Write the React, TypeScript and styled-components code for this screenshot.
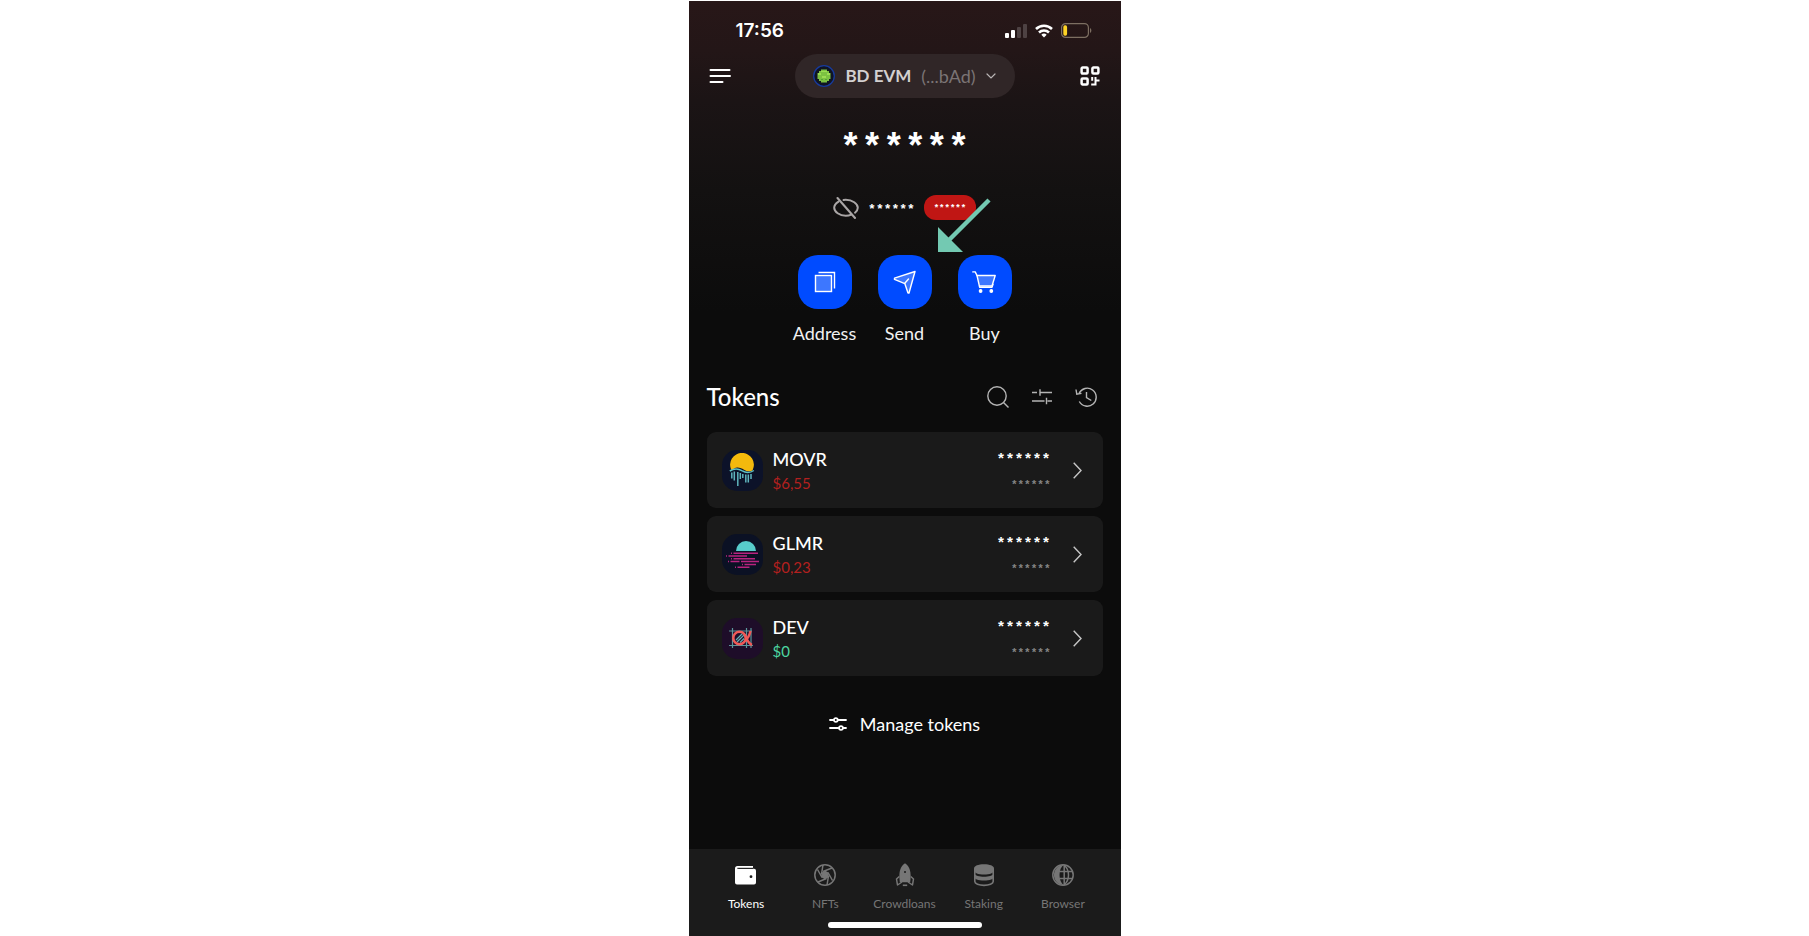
import React from 'react';
import styled, { createGlobalStyle } from 'styled-components';

const GlobalStyle = createGlobalStyle`
  *, *::before, *::after { box-sizing: border-box; }
  body { margin: 0; background: #fff; font-family: Lato, "Liberation Sans", sans-serif; }
  button { margin: 0; padding: 0; border: 0; background: none; color: inherit; font: inherit; cursor: pointer; }
  a { color: inherit; text-decoration: none; }
  h1, h2, p, ul { margin: 0; padding: 0; font-weight: inherit; }
  ul { list-style: none; }
  svg { display: block; flex: none; }
`;

const Page = styled.div`
  display: flex;
  justify-content: center;
  min-height: 100vh;
  padding-top: 1px;
`;

const Phone = styled.div`
  display: flex;
  flex-direction: column;
  width: 100%;
  max-width: 432px;
  color: #fff;
  background: #0c0c0c linear-gradient(#281718 0, #231617 50px, #1b1415 100px, #131111 190px, #0c0c0c 310px) no-repeat;
`;

const StatusBar = styled.div`
  display: flex;
  align-items: center;
  justify-content: space-between;
  height: 53px;
  padding: 6px 29px 0 47px;
`;

const Clock = styled.time`
  font: 600 19px/24px Inter, sans-serif;
`;

const StatusIcons = styled.div`
  display: flex;
  align-items: center;
  gap: 8px;
`;

const Header = styled.header`
  display: flex;
  align-items: center;
  justify-content: space-between;
  padding: 0 18px;
`;

const IconButton = styled.button`
  display: grid;
  place-items: center;
  width: 26px;
  height: 26px;
  color: #b4b4b4;
`;

const AccountButton = styled.button`
  display: flex;
  align-items: center;
  justify-content: center;
  width: 220px;
  height: 44px;
  gap: 10px;
  border-radius: 22px;
  background: #302627;
  font-size: 17px;
  line-height: 24px;
`;

const AccountName = styled.span`
  color: #d3d0d0;
  font-weight: 700;
`;

const AccountAddress = styled.span`
  color: #7b7475;
  font-size: 18px;
`;

const Mask = styled.span<{ $size: number; $color?: string }>`
  color: ${(p) => p.$color ?? '#fff'};
  font-family: "Liberation Mono", monospace;
  font-weight: 700;
  font-size: ${(p) => p.$size}px;
  line-height: 1;
`;

const Balance = styled.h1`
  display: flex;
  justify-content: center;
  padding: 34px 0 27px;
`;

const Amounts = styled.div`
  position: relative;
  display: flex;
  align-items: center;
  height: 25px;
  margin-bottom: 35px;
  gap: 9px;

  ${Mask} {
    padding-top: 3px;
  }
`;

const Change = styled.span`
  display: flex;
  align-items: center;
  justify-content: center;
  width: 52px;
  height: 25px;
  border-radius: 12px;
  background: #c01614;
`;

const Pointer = styled.svg`
  position: absolute;
  top: 3px;
  right: -15px;
`;

const Actions = styled.div`
  display: flex;
  justify-content: center;
`;

const Action = styled.button`
  display: flex;
  flex-direction: column;
  align-items: center;
  width: 80px;
  gap: 12px;
  color: #f2f2f2;
  font-size: 18px;
  line-height: 24px;
`;

const ActionTile = styled.span`
  display: grid;
  place-items: center;
  width: 54px;
  height: 54px;
  border-radius: 20px;
  background: #004bff;
`;

const SectionHeader = styled.div`
  display: flex;
  align-items: center;
  justify-content: space-between;
  height: 40px;
  margin: 32px 22px 15px 18px;
`;

const SectionTitle = styled.h2`
  font-size: 24px;
  font-weight: 500;
  line-height: 32px;
`;

const Tools = styled.div`
  display: flex;
  gap: 18px;
`;

const TokenList = styled.ul`
  display: grid;
  gap: 8px;
  padding: 0 18px;
`;

const TokenCard = styled.button`
  display: flex;
  align-items: center;
  width: 100%;
  height: 76px;
  padding: 0 21px 0 15px;
  border-radius: 9px;
  background: #1a1a1a;
  text-align: left;
`;

const TokenLogo = styled.span<{ $bg: string }>`
  display: grid;
  place-items: center;
  width: 41px;
  height: 41px;
  margin-right: 10px;
  border-radius: 15px;
  background: ${(p) => p.$bg};
`;

const TokenText = styled.span`
  display: flex;
  flex: 1;
  flex-direction: column;
  gap: 2px;
`;

const TokenName = styled.span`
  font-size: 18px;
  font-weight: 500;
  line-height: 24px;
`;

const TokenPrice = styled.span<{ $up?: boolean }>`
  color: ${(p) => (p.$up ? '#4cd6a0' : '#b3201f')};
  font-size: 15px;
  line-height: 20px;
`;

const TokenAmount = styled.span`
  display: flex;
  flex-direction: column;
  align-items: flex-end;
  gap: 12px;
  margin-right: 22px;
  padding-top: 4px;
`;

const ManageButton = styled.button`
  display: flex;
  align-items: center;
  align-self: center;
  gap: 13px;
  margin: 28px 0;
  font-size: 18px;
  line-height: 40px;
`;

const TabBar = styled.nav`
  display: flex;
  flex-direction: column;
  align-items: center;
  gap: 8px;
  margin-top: auto;
  padding: 14px 18px 8px;
  background: #1b1b1b;
`;

const Tabs = styled.div`
  display: flex;
  width: 100%;
`;

const Tab = styled.a<{ $active?: boolean }>`
  display: flex;
  flex: 1 1 0;
  flex-direction: column;
  align-items: center;
  gap: 7px;
  color: ${(p) => (p.$active ? '#fff' : '#767676')};
  font-size: 12px;
  line-height: 20px;
  white-space: nowrap;
`;

const HomeIndicator = styled.div`
  width: 154px;
  height: 6px;
  border-radius: 3px;
  background: #fff;
`;

const STARS = '******';

const SignalIcon = () => (
  <svg width="22" height="14" viewBox="0 0 22 14" fill="#fff">
    <rect x="0" y="9" width="4" height="5" rx="1" />
    <rect x="6" y="6" width="4" height="8" rx="1" />
    <rect x="12" y="3" width="4" height="11" rx="1" fill="#4e4243" />
    <rect x="18" y="0" width="4" height="14" rx="1" fill="#4e4243" />
  </svg>
);

const WifiIcon = () => (
  <svg width="18" height="14" viewBox="0 0 18 14" fill="none" stroke="#fff" strokeWidth="2.6">
    <path d="M1 5a11.6 11.6 0 0 1 16 0" />
    <path d="M4 8.5a7.2 7.2 0 0 1 10 0" />
    <path d="M9 13.6 6.3 10.8a4 4 0 0 1 5.4 0z" fill="#fff" stroke="none" />
  </svg>
);

const BatteryIcon = () => (
  <svg width="31" height="15" viewBox="0 0 31 15">
    <rect x=".6" y=".6" width="26.8" height="13.8" rx="4" fill="none" stroke="#7d6f62" strokeWidth="1.2" />
    <rect x="2.3" y="2.3" width="3.8" height="10.4" rx="1.6" fill="#ffd426" />
    <path d="M29 5c1.8.8 1.8 4.2 0 5z" fill="#7d6f62" />
  </svg>
);

const MenuIcon = () => (
  <svg width="22" height="16" viewBox="0 0 22 16" fill="none" stroke="#fff" strokeWidth="2" strokeLinecap="round">
    <path d="M1.5 2h19M1.500 8h19.500M1.500 14h12" />
  </svg>
);

const QrIcon = () => (
  <svg width="20" height="20" viewBox="0 0 20 20" fill="none" stroke="#fff" strokeWidth="2.5">
    <rect x="1.600" y="1.600" width="6" height="6" rx="1" />
    <rect x="12.400" y="1.600" width="6" height="6" rx="1" />
    <rect x="1.600" y="12.400" width="6" height="6" rx="1" />
    <path d="M12.200 11v3.800M11.200 18.400h4.300V11M15.500 14.400h4" strokeWidth="2" />
  </svg>
);

const AvatarIcon = () => (
  <svg width="22" height="22" viewBox="0 0 22 22">
    <circle cx="11" cy="11" r="10.300" fill="#101522" stroke="#173a9c" strokeWidth="1.300" />
    <path d="M8 4.500h6V6h2v2h1.500v6H16v2h-2v1.500H8V16H6v-2H4.500V8H6V6h2z" fill="#7cc142" />
    <path d="M5 8h3v2H5zM14 8h3v2h-3zM9 11h4v2H9zM8 6h6v1H8z" fill="#9bdc52" />
    <path d="M8 14h2v1H8zM12 14h2v1h-2z" fill="#56a236" />
  </svg>
);

const ChevronDown = () => (
  <svg width="10" height="6" viewBox="0 0 10 6" fill="none" stroke="#b9b5b5" strokeWidth="1.2" strokeLinecap="round">
    <path d="m1 1 4 4 4-4" />
  </svg>
);

const HiddenEyeIcon = () => (
  <svg width="26" height="22" viewBox="0 0 26 22" fill="none" stroke="#aaa6a6" strokeWidth="2" strokeLinecap="round">
    <path d="M5.500 4.600C2.900 6.300 1.200 8.700 1.200 10.700c0 4 5.300 8 11.600 8 2 0 3.900-.4 5.500-1.100" />
    <path d="M10.500 3c.8-.2 1.500-.2 2.300-.2 6.500 0 12 4 12 8 0 1.700-1 3.400-2.800 4.900" />
    <path d="m4.500 1 17.500 20" />
  </svg>
);

const AddressIcon = () => (
  <svg width="22" height="22" viewBox="0 0 22 22" fill="none" stroke="#fff" strokeWidth="1.400">
    <rect x="1.500" y="4.500" width="16" height="16" fill="#3d77ff" />
    <path d="M4.500 1.500h16v16" />
  </svg>
);

const SendIcon = () => (
  <svg width="24" height="24" viewBox="0 0 24 24" fill="none" stroke="#fff" strokeWidth="1.400" strokeLinejoin="round" strokeLinecap="round">
    <path d="M22 1.500 1.500 8.200v1.200l10.300 4.200L15 23h1z" fill="#3d77ff" />
    <path d="m11.800 13.300 3.700-4.300" />
  </svg>
);

const CartIcon = () => (
  <svg width="26" height="22" viewBox="0 0 26 22" fill="none" stroke="#fff" strokeWidth="1.400" strokeLinecap="round" strokeLinejoin="round">
    <path d="M5 4.500h18.200L20 15H7.500" fill="#3d77ff" />
    <path d="M.8.900h2.400L5 4.500 7.700 16.300H20l1-3" />
    <circle cx="8.600" cy="20" r="1.200" fill="#fff" />
    <circle cx="19.300" cy="20" r="1.200" fill="#fff" />
  </svg>
);

const SearchIcon = () => (
  <svg width="22" height="22" viewBox="0 0 22 22" fill="none" stroke="currentColor" strokeWidth="1.400">
    <circle cx="10" cy="10" r="9.200" />
    <path d="m16.500 16.500 5 5" />
  </svg>
);

const FilterIcon = () => (
  <svg width="20" height="16" viewBox="0 0 20 16" fill="none" stroke="currentColor" strokeWidth="1.400">
    <path d="M0 3.500h5M8 3.500h12M8 .2v6.600M0 12h12.500M15.500 12h4.500M14.500 8.700v6.600" />
  </svg>
);

const HistoryIcon = () => (
  <svg width="22" height="20" viewBox="0 0 22 20" fill="none" stroke="currentColor" strokeWidth="1.400">
    <path d="M4 6.500A9 9 0 1 1 4.300 14.500" />
    <path d="M1 2.500l.8 4.700 4.700-.8M11.500 5v5.500l4.800 3" />
  </svg>
);

const ChevronRight = () => (
  <svg width="9" height="17" viewBox="0 0 9 17" fill="none" stroke="#c6c6c6" strokeWidth="1.400">
    <path d="m.7.800 7.300 7.700L.7 16.200" />
  </svg>
);

const ManageIcon = () => (
  <svg width="18" height="14" viewBox="0 0 18 14" fill="none" stroke="#fff" strokeWidth="1.800" strokeLinecap="round">
    <path d="M1 3h3.500M9 3h8M1 11h8.500M14 11h3" />
    <circle cx="6.800" cy="3" r="1.900" />
    <circle cx="12" cy="11" r="1.900" />
  </svg>
);

const MoonriverLogo = () => (
  <svg width="26" height="34" viewBox="0 0 26 34" fill="none">
    <path d="M2.300 17A11.900 11.900 0 1 1 23.700 17c-1 1.200-3.600 1.800-6.200.9-3-1.100-5.400-3.800-9.300-3.500-2.200.2-3.500 1.500-5.900 2.600z" fill="#f4b90d" />
    <path d="M.8 18c4.200-2.600 7.400-3.200 12-.300 4.500 2.600 8 2.600 12-.2" stroke="#5fc0c4" strokeWidth="1.500" />
    <path d="M2.800 19.500v6M5.300 18.500v9M8.800 19v14M11.300 20v6M13.800 21v4M16.800 21.500v8M19.300 21.500v8M22 21v5" stroke="#5fb4bd" strokeWidth="1.500" />
  </svg>
);

const MoonbeamLogo = () => (
  <svg width="34" height="28" viewBox="0 0 34 28">
    <path d="M11 11a10 10 0 0 1 20 0z" fill="#57cccb" />
    <path
      d="M6 13.200h1M8.500 13.200H33M1 16h1M3.500 16H22M6 18.800h1M8.500 18.800H30M3 21.600h1M5.500 21.600h9M16 21.600h18M17 24.400h1M19.500 24.400H31M10 27.200h1M12.500 27.200h12"
      stroke="#b8237f"
      strokeWidth="1.500"
    />
  </svg>
);

const AlphaLogo = () => (
  <svg width="26" height="22" viewBox="0 0 26 22" fill="none">
    <path d="M0 4h23M0 18.500h24M3.500 1v20M17.500 1v20M22 1v20" stroke="#5b969c" strokeWidth="1.200" />
    <path d="m7 13 6.500-6.500M8 15l7-7M11 15.500l4-4" stroke="#5fb0b6" strokeWidth="1.200" />
    <circle cx="10.500" cy="11" r="6.200" stroke="#ef5a58" strokeWidth="2.500" />
    <path d="M21.500 4c-.8 3.500-2.600 7.500-5.500 10M15.500 7.500c2 4.500 3.700 9.200 7.500 10.500" stroke="#ef5a58" strokeWidth="2.500" />
  </svg>
);

const WalletIcon = () => (
  <svg width="24" height="24" viewBox="0 0 24 24">
    <path d="M3.500 3H19v2H4.500v.8H20a2 2 0 0 1 2 2V19.500a2 2 0 0 1-2 2H3a2 2 0 0 1-2-2V5.500A2.500 2.500 0 0 1 3.500 3z" fill="currentColor" />
    <path d="M3.300 5.300H19" stroke="#1b1b1b" strokeWidth="1" />
    <circle cx="17" cy="13.700" r="1.400" fill="#1b1b1b" />
  </svg>
);

const ApertureIcon = () => (
  <svg width="24" height="24" viewBox="0 0 24 24" fill="none" stroke="currentColor" strokeWidth="1.500">
    <circle cx="12" cy="12" r="10.200" />
    <path d="M12 8.500 15 10.200v3.600L12 15.500 9 13.800v-3.600z" fill="currentColor" />
    <path d="M10 8.500 19 5M15 9.500l4.500 8M15.500 13 14 22M13.500 15.500 5 19M9 14.500l-4.500-8M8.500 11 10 2" />
  </svg>
);

const RocketIcon = () => (
  <svg width="24" height="24" viewBox="0 0 24 24">
    <path d="M12 .3c4.600 3.400 6.600 8 5.200 19H6.800C5.400 8.300 7.400 3.700 12 .3z" fill="currentColor" />
    <path d="M6.300 13.500 3.500 16l1 6 4.500-3M17.700 13.500l2.800 2.500-1 6-4.500-3" fill="none" stroke="currentColor" strokeWidth="1.500" strokeLinejoin="round" />
    <path d="M9.800 22.300h4.400" stroke="currentColor" strokeWidth="1.600" />
    <circle cx="12" cy="9" r="1" fill="#1b1b1b" />
  </svg>
);

const CoinsIcon = () => (
  <svg width="24" height="24" viewBox="0 0 24 24" fill="none" stroke="currentColor" strokeWidth="1.600">
    <path d="M2 5.300C2 2.800 6.300 1.200 12 1.200s10 1.600 10 4.100v2.200c0 2.500-4.300 4-10 4s-10-1.500-10-4z" fill="currentColor" stroke="none" />
    <path d="M2 10.500c1.500 2.400 5.300 3.200 10 3.200s8.500-.8 10-3.200v3.200c0 2.300-4.300 3.800-10 3.800S2 16 2 13.700z" fill="currentColor" stroke="none" />
    <path d="M2.800 6v12.600c0 2.200 4.100 3.800 9.200 3.800s9.200-1.600 9.200-3.800V6" />
  </svg>
);

const GlobeIcon = () => (
  <svg width="24" height="24" viewBox="0 0 24 24" fill="none" stroke="currentColor" strokeWidth="1.500">
    <circle cx="12" cy="12" r="10.200" />
    <path d="M13 1.800C7 5 7 19 13 22.200A10.200 10.200 0 1 1 13 1.800z" fill="currentColor" stroke="none" />
    <path d="M13 2c6 5 6 15 0 20M13.200 2v20M8 8.500h13.500M8 15.500h13.500" />
  </svg>
);

const actions = [
  { label: 'Address', Icon: AddressIcon },
  { label: 'Send', Icon: SendIcon },
  { label: 'Buy', Icon: CartIcon },
];

const tokens = [
  { name: 'MOVR', price: '$6,55', up: false, bg: '#0c1229', Logo: MoonriverLogo },
  { name: 'GLMR', price: '$0,23', up: false, bg: '#0b1124', Logo: MoonbeamLogo },
  { name: 'DEV', price: '$0', up: true, bg: '#1e0d29', Logo: AlphaLogo },
];

const tabs = [
  { label: 'Tokens', Icon: WalletIcon },
  { label: 'NFTs', Icon: ApertureIcon },
  { label: 'Crowdloans', Icon: RocketIcon },
  { label: 'Staking', Icon: CoinsIcon },
  { label: 'Browser', Icon: GlobeIcon },
];

export default function App() {
  return (
    <Page>
      <GlobalStyle />
      <Phone>
        <StatusBar>
          <Clock>17:56</Clock>
          <StatusIcons>
            <SignalIcon />
            <WifiIcon />
            <BatteryIcon />
          </StatusIcons>
        </StatusBar>

        <Header>
          <IconButton aria-label="Menu"><MenuIcon /></IconButton>
          <AccountButton>
            <AvatarIcon />
            <AccountName>BD EVM</AccountName>
            <AccountAddress>(...bAd)</AccountAddress>
            <ChevronDown />
          </AccountButton>
          <IconButton aria-label="Scan"><QrIcon /></IconButton>
        </Header>

        <main>
          <Balance><Mask $size={36}>{STARS}</Mask></Balance>
          <Actions>
            <Amounts>
              <IconButton aria-label="Show balance"><HiddenEyeIcon /></IconButton>
              <Mask $size={13}>{STARS}</Mask>
              <Change><Mask $size={9}>{STARS}</Mask></Change>
              <Pointer width="67" height="56" viewBox="0 0 67 56" aria-hidden="true">
                <path d="M65 2 24 43" stroke="#73c9b2" strokeWidth="4.500" />
                <path d="M14 29v25h25z" fill="#73c9b2" />
              </Pointer>
            </Amounts>
          </Actions>
          <Actions>
            {actions.map(({ label, Icon }) => (
              <Action key={label}>
                <ActionTile><Icon /></ActionTile>
                {label}
              </Action>
            ))}
          </Actions>

          <SectionHeader>
            <SectionTitle>Tokens</SectionTitle>
            <Tools>
              <IconButton aria-label="Search"><SearchIcon /></IconButton>
              <IconButton aria-label="Filter"><FilterIcon /></IconButton>
              <IconButton aria-label="History"><HistoryIcon /></IconButton>
            </Tools>
          </SectionHeader>

          <TokenList>
            {tokens.map(({ name, price, up, bg, Logo }) => (
              <li key={name}>
                <TokenCard>
                  <TokenLogo $bg={bg}><Logo /></TokenLogo>
                  <TokenText>
                    <TokenName>{name}</TokenName>
                    <TokenPrice $up={up}>{price}</TokenPrice>
                  </TokenText>
                  <TokenAmount>
                    <Mask $size={15}>{STARS}</Mask>
                    <Mask $size={11} $color="#858585">{STARS}</Mask>
                  </TokenAmount>
                  <ChevronRight />
                </TokenCard>
              </li>
            ))}
          </TokenList>
        </main>

        <ManageButton>
          <ManageIcon />
          Manage tokens
        </ManageButton>

        <TabBar>
          <Tabs>
            {tabs.map(({ label, Icon }, i) => (
              <Tab key={label} href="#" $active={i === 0}>
                <Icon />
                {label}
              </Tab>
            ))}
          </Tabs>
          <HomeIndicator />
        </TabBar>
      </Phone>
    </Page>
  );
}
